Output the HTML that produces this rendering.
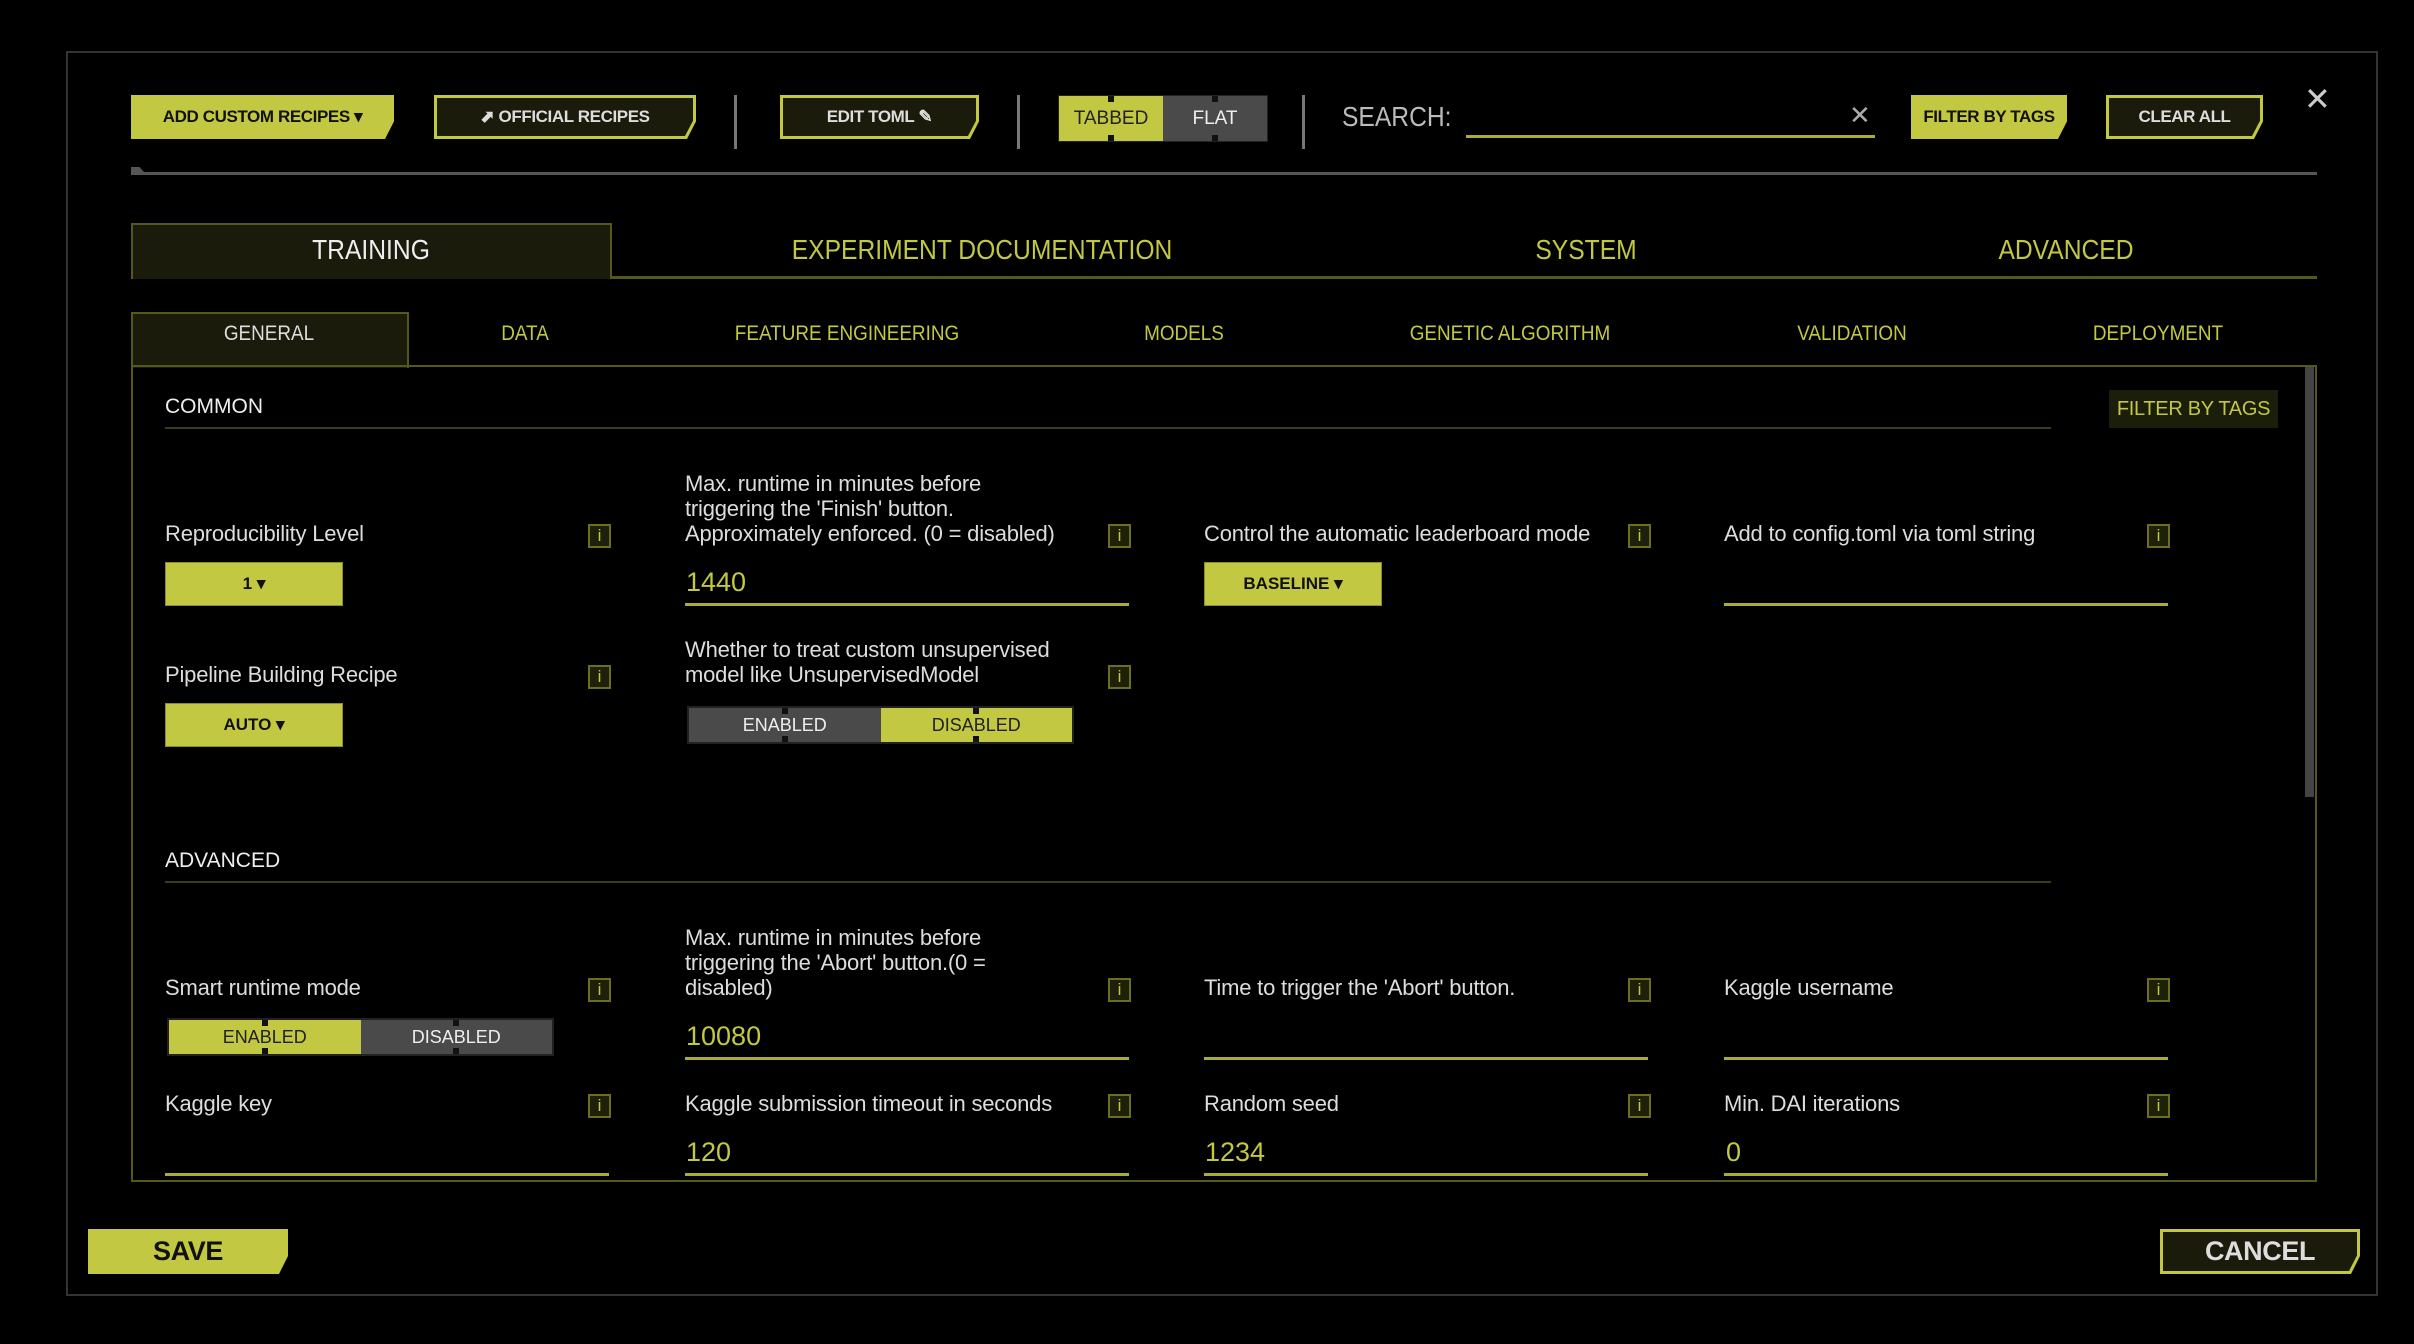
<!DOCTYPE html>
<html><head><meta charset="utf-8"><style>
*{margin:0;padding:0;box-sizing:border-box}
body{width:2414px;height:1344px;background:#000;position:relative;overflow:hidden;font-family:"Liberation Sans Narrow","Liberation Sans",sans-serif;color:#ddd}
.a{position:absolute}
.t{position:absolute;white-space:nowrap}
.btnY{position:absolute;background:#c3c842;color:#111;font-weight:bold;font-size:17px;letter-spacing:-0.4px;white-space:nowrap;display:flex;align-items:center;justify-content:center;clip-path:polygon(0 0,100% 0,100% 60%,calc(100% - 9px) 100%,0 100%)}
.btnO{position:absolute;background:#c3c842;clip-path:polygon(0 0,100% 0,100% 60%,calc(100% - 9px) 100%,0 100%)}
.btnO>div{position:absolute;left:3px;top:3px;right:3px;bottom:3px;background:#1a1b0a;color:#ddd;font-weight:bold;font-size:17px;letter-spacing:-0.4px;white-space:nowrap;display:flex;align-items:center;justify-content:center;clip-path:polygon(0 0,100% 0,100% 60%,calc(100% - 8px) 100%,0 100%)}
.sep{position:absolute;width:3px;background:#777;top:95px;height:54px}
.info{position:absolute;width:23px;height:24px;border:2px solid #6b6e20;background:#1e200a;color:#c3c842;font-size:17px;line-height:20px;text-align:center}
.lab{position:absolute;font-size:22px;line-height:25px;color:#ddd;white-space:nowrap;letter-spacing:-0.2px}
.ul{position:absolute;height:3px;background:#a9ad36}
.val{position:absolute;font-size:27px;color:#c3c842;line-height:30px}
.dd{position:absolute;background:#c3c842;color:#111;font-weight:bold;font-size:17px;display:flex;align-items:center;justify-content:center;border:1px solid #8a8d2a}
.tog{position:absolute;height:38px;display:flex;border:2px solid #222;background:#222}
.tog div{flex:1;display:flex;align-items:center;justify-content:center;font-size:18px;position:relative}
.on{background:#c3c842;color:#222}
.off{background:#4a4a4a;color:#eee}
.tog div:before,.tog div:after{content:"";position:absolute;left:50%;width:6px;height:6px;background:#111;margin-left:-3px}
.tog div:before{top:0}.tog div:after{bottom:0}
.mt{position:absolute;font-size:28px;color:#c3c842;top:233px;line-height:34px;white-space:nowrap;transform:translateX(-50%) scaleX(0.88)}
.st{position:absolute;font-size:21px;color:#c3c842;top:321px;line-height:26px;white-space:nowrap;transform:translateX(-50%) scaleX(0.9)}
</style></head><body>
<div class="a" style="left:66px;top:51px;width:2312px;height:1245px;border:2px solid #333"></div>

<div class="btnY" style="left:131px;top:95px;width:263px;height:44px">ADD CUSTOM RECIPES ▾</div>
<div class="btnO" style="left:434px;top:95px;width:262px;height:44px"><div>⬈ OFFICIAL RECIPES</div></div>
<div class="sep" style="left:734px"></div>
<div class="btnO" style="left:780px;top:95px;width:199px;height:44px"><div>EDIT TOML ✎</div></div>
<div class="sep" style="left:1017px"></div>
<div class="tog" style="left:1058px;top:95px;width:210px;height:47px;border-width:1px">
<div class="on" style="font-size:19px">TABBED</div><div class="off" style="font-size:19px">FLAT</div></div>
<div class="sep" style="left:1302px"></div>
<div class="t" style="left:1342px;top:100px;font-size:28px;color:#bbb;line-height:34px;transform:scaleX(0.88);transform-origin:left">SEARCH:</div>
<div class="ul" style="left:1466px;top:135px;width:409px"></div>
<div class="t" style="left:1849px;top:100px;font-size:26px;color:#aaa">✕</div>
<div class="btnY" style="left:1911px;top:95px;width:156px;height:44px">FILTER BY TAGS</div>
<div class="btnO" style="left:2106px;top:95px;width:157px;height:44px"><div>CLEAR ALL</div></div>
<div class="t" style="left:2304px;top:80px;font-size:32px;color:#ccc">✕</div>
<div class="a" style="left:131px;top:172px;width:2186px;height:3px;background:#555"></div>
<div class="a" style="left:131px;top:167px;width:14px;height:6px;background:#555;clip-path:polygon(0 0,60% 0,100% 100%,0 100%)"></div>

<div class="a" style="left:131px;top:223px;width:481px;height:56px;background:#1a1b0a;border:2px solid #55581a;border-bottom:none"></div>
<div class="a" style="left:611px;top:276px;width:1706px;height:3px;background:#55581a"></div>
<div class="mt" style="left:371px;color:#eee">TRAINING</div>
<div class="mt" style="left:982px">EXPERIMENT DOCUMENTATION</div>
<div class="mt" style="left:1586px">SYSTEM</div>
<div class="mt" style="left:2066px">ADVANCED</div>

<div class="a" style="left:131px;top:312px;width:278px;height:56px;background:#1a1b0a;border:2px solid #55581a;border-bottom:none"></div>
<div class="st" style="left:269px;color:#ddd">GENERAL</div>
<div class="st" style="left:525px">DATA</div>
<div class="st" style="left:847px">FEATURE ENGINEERING</div>
<div class="st" style="left:1184px">MODELS</div>
<div class="st" style="left:1510px">GENETIC ALGORITHM</div>
<div class="st" style="left:1852px">VALIDATION</div>
<div class="st" style="left:2158px">DEPLOYMENT</div>

<div class="a" style="left:131px;top:365px;width:2186px;height:817px;border:2px solid #55581a"></div>
<div class="a" style="left:2305px;top:367px;width:9px;height:430px;background:#444"></div>

<div class="t" style="left:165px;top:395px;font-size:21px;color:#eee">COMMON</div>
<div class="a" style="left:165px;top:427px;width:1886px;height:2px;background:#3a3c14"></div>
<div class="a" style="left:2109px;top:390px;width:169px;height:38px;background:#1c1e0c;color:#c3c842;font-size:20px;white-space:nowrap;display:flex;align-items:center;justify-content:center;letter-spacing:-0.3px">FILTER BY TAGS</div>

<div class="lab" style="left:165px;top:521px">Reproducibility Level</div>
<div class="info" style="left:588px;top:524px">i</div>
<div class="dd" style="left:165px;top:562px;width:178px;height:44px">1 ▾</div>

<div class="lab" style="left:685px;top:471px">Max. runtime in minutes before<br>triggering the 'Finish' button.<br>Approximately enforced. (0 = disabled)</div>
<div class="info" style="left:1108px;top:524px">i</div>
<div class="val" style="left:686px;top:567px">1440</div>
<div class="ul" style="left:685px;top:603px;width:444px"></div>

<div class="lab" style="left:1204px;top:521px">Control the automatic leaderboard mode</div>
<div class="info" style="left:1628px;top:524px">i</div>
<div class="dd" style="left:1204px;top:562px;width:178px;height:44px">BASELINE ▾</div>

<div class="lab" style="left:1724px;top:521px">Add to config.toml via toml string</div>
<div class="info" style="left:2147px;top:524px">i</div>
<div class="ul" style="left:1724px;top:603px;width:444px"></div>

<div class="lab" style="left:165px;top:662px">Pipeline Building Recipe</div>
<div class="info" style="left:588px;top:665px">i</div>
<div class="dd" style="left:165px;top:703px;width:178px;height:44px">AUTO ▾</div>

<div class="lab" style="left:685px;top:637px">Whether to treat custom unsupervised<br>model like UnsupervisedModel</div>
<div class="info" style="left:1108px;top:665px">i</div>
<div class="tog" style="left:687px;top:706px;width:387px"><div class="off">ENABLED</div><div class="on">DISABLED</div></div>

<div class="t" style="left:165px;top:849px;font-size:21px;color:#eee">ADVANCED</div>
<div class="a" style="left:165px;top:881px;width:1886px;height:2px;background:#3a3c14"></div>

<div class="lab" style="left:165px;top:975px">Smart runtime mode</div>
<div class="info" style="left:588px;top:978px">i</div>
<div class="tog" style="left:167px;top:1018px;width:387px"><div class="on">ENABLED</div><div class="off">DISABLED</div></div>

<div class="lab" style="left:685px;top:925px">Max. runtime in minutes before<br>triggering the 'Abort' button.(0 =<br>disabled)</div>
<div class="info" style="left:1108px;top:978px">i</div>
<div class="val" style="left:686px;top:1021px">10080</div>
<div class="ul" style="left:685px;top:1057px;width:444px"></div>

<div class="lab" style="left:1204px;top:975px">Time to trigger the 'Abort' button.</div>
<div class="info" style="left:1628px;top:978px">i</div>
<div class="ul" style="left:1204px;top:1057px;width:444px"></div>

<div class="lab" style="left:1724px;top:975px">Kaggle username</div>
<div class="info" style="left:2147px;top:978px">i</div>
<div class="ul" style="left:1724px;top:1057px;width:444px"></div>

<div class="lab" style="left:165px;top:1091px">Kaggle key</div>
<div class="info" style="left:588px;top:1094px">i</div>
<div class="ul" style="left:165px;top:1173px;width:444px"></div>

<div class="lab" style="left:685px;top:1091px">Kaggle submission timeout in seconds</div>
<div class="info" style="left:1108px;top:1094px">i</div>
<div class="val" style="left:686px;top:1137px">120</div>
<div class="ul" style="left:685px;top:1173px;width:444px"></div>

<div class="lab" style="left:1204px;top:1091px">Random seed</div>
<div class="info" style="left:1628px;top:1094px">i</div>
<div class="val" style="left:1205px;top:1137px">1234</div>
<div class="ul" style="left:1204px;top:1173px;width:444px"></div>

<div class="lab" style="left:1724px;top:1091px">Min. DAI iterations</div>
<div class="info" style="left:2147px;top:1094px">i</div>
<div class="val" style="left:1726px;top:1137px">0</div>
<div class="ul" style="left:1724px;top:1173px;width:444px"></div>

<div class="btnY" style="left:88px;top:1229px;width:200px;height:45px;font-size:27px">SAVE</div>
<div class="btnO" style="left:2160px;top:1229px;width:200px;height:45px"><div style="font-size:27px">CANCEL</div></div>
</body></html>
